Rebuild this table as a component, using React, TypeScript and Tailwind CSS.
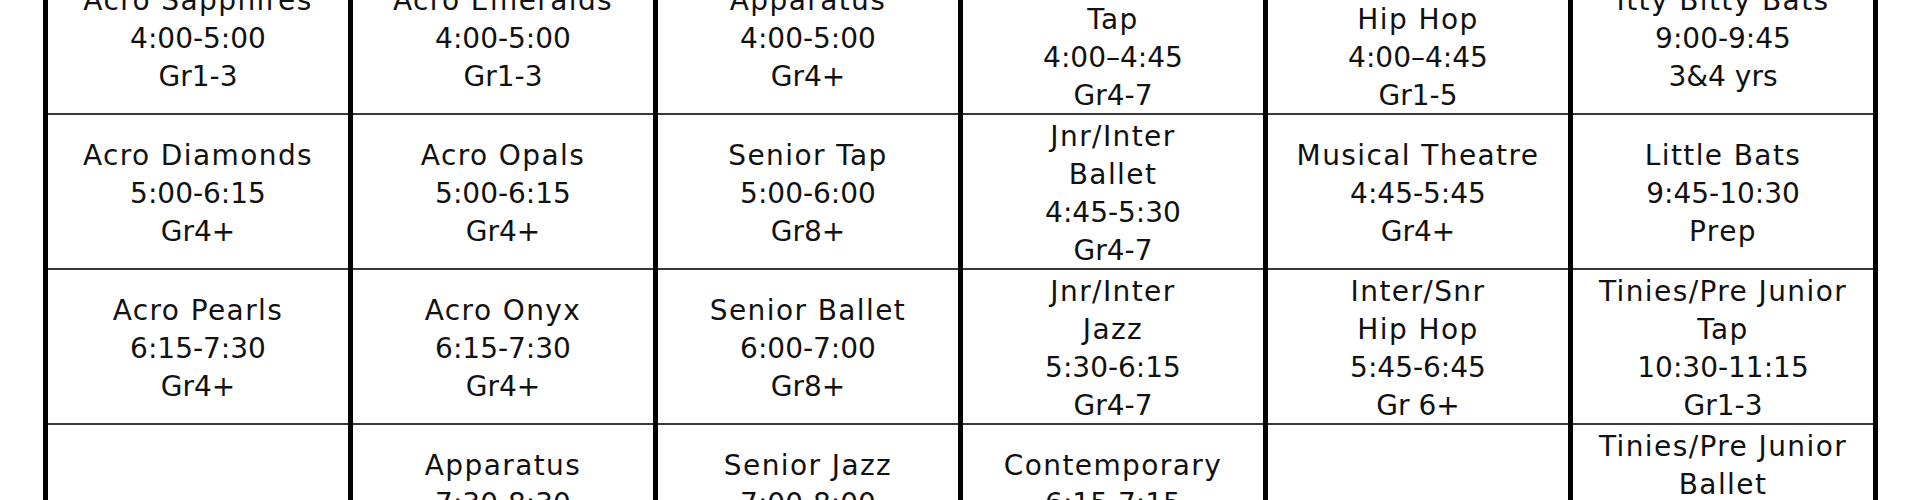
import React from "react";

type Cell = string[];

const rows: Cell[][] = [
  [
    ["Acro Sapphires", "4:00-5:00", "Gr1-3"],
    ["Acro Emeralds", "4:00-5:00", "Gr1-3"],
    ["Apparatus", "4:00-5:00", "Gr4+"],
    ["Junior", "Tap", "4:00–4:45", "Gr4-7"],
    ["Junior", "Hip Hop", "4:00–4:45", "Gr1-5"],
    ["Itty Bitty Bats", "9:00-9:45", "3&4 yrs"],
  ],
  [
    ["Acro Diamonds", "5:00-6:15", "Gr4+"],
    ["Acro Opals", "5:00-6:15", "Gr4+"],
    ["Senior Tap", "5:00-6:00", "Gr8+"],
    ["Jnr/Inter", "Ballet", "4:45-5:30", "Gr4-7"],
    ["Musical Theatre", "4:45-5:45", "Gr4+"],
    ["Little Bats", "9:45-10:30", "Prep"],
  ],
  [
    ["Acro Pearls", "6:15-7:30", "Gr4+"],
    ["Acro Onyx", "6:15-7:30", "Gr4+"],
    ["Senior Ballet", "6:00-7:00", "Gr8+"],
    ["Jnr/Inter", "Jazz", "5:30-6:15", "Gr4-7"],
    ["Inter/Snr", "Hip Hop", "5:45-6:45", "Gr 6+"],
    ["Tinies/Pre Junior", "Tap", "10:30-11:15", "Gr1-3"],
  ],
  [
    [],
    ["Apparatus", "7:30-8:30", "Gr4+"],
    ["Senior Jazz", "7:00-8:00", "Gr8+"],
    ["Contemporary", "6:15-7:15", "Gr6+"],
    [],
    ["Tinies/Pre Junior", "Ballet", "11:15-12:00", "Gr1-3"],
  ],
];

// class names are set a touch wider than times/grades, like the original font
const isName = (line: string) => !/\d/.test(line);

const ClassCell = ({ lines }: { lines: Cell }) => (
  <div className="h-[155px] pt-[5px] bg-white border-b-2 border-[#383838] flex flex-col items-center justify-center text-center">
    {lines.map((line, i) => (
      <span
        key={i}
        className={
          isName(line)
            ? "leading-[38px] whitespace-nowrap tracking-[1.4px]"
            : "leading-[38px] whitespace-nowrap"
        }
      >
        {line}
      </span>
    ))}
  </div>
);

export default function App() {
  return (
    <div className="w-[1920px] h-[500px] overflow-hidden bg-white">
      <div
        className="ml-[43px] -mt-[40px] w-max grid grid-cols-[repeat(6,300px)] gap-x-[5px] bg-black border-x-[5px] border-black text-[28px] text-[#111]"
        style={{ fontFamily: '"DejaVu Sans", sans-serif' }}
      >
        {rows.flatMap((row, r) =>
          row.map((cell, c) => <ClassCell key={`${r}-${c}`} lines={cell} />)
        )}
      </div>
    </div>
  );
}
